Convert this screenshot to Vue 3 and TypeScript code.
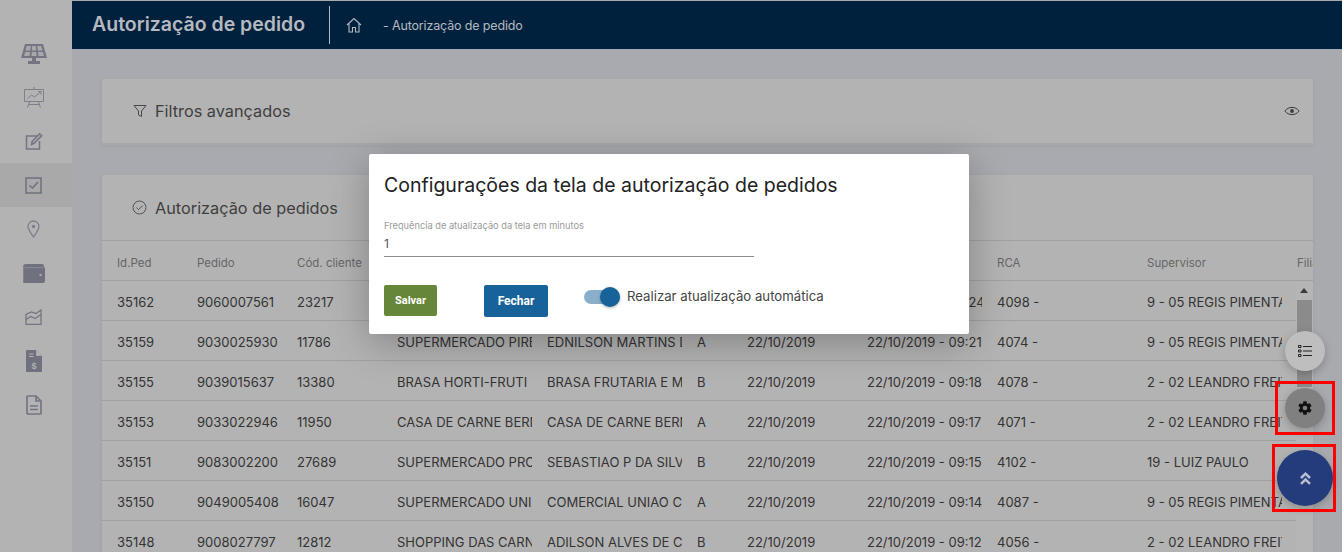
<script setup lang="ts">
interface Row { id: string; ped: string; cli: string; a: string; b: string; t: string; h: string; r: string; s: string }
const d = '22/10/2019'
const rows: Row[] = [
  { id: '35162', ped: '9060007561', cli: '23217', a: 'SUPERMERCADO SAO', b: 'MERCADO SAO JOSE', t: 'A', h: '09:24', r: '4098 -', s: '9 - 05 REGIS PIMENTA' },
  { id: '35159', ped: '9030025930', cli: '11786', a: 'SUPERMERCADO PIRES', b: 'EDNILSON MARTINS DA', t: 'A', h: '09:21', r: '4074 -', s: '9 - 05 REGIS PIMENTA' },
  { id: '35155', ped: '9039015637', cli: '13380', a: 'BRASA HORTI-FRUTI', b: 'BRASA FRUTARIA E MERCEARIA', t: 'B', h: '09:18', r: '4078 -', s: '2 - 02 LEANDRO FREITAS' },
  { id: '35153', ped: '9033022946', cli: '11950', a: 'CASA DE CARNE BERNARDO', b: 'CASA DE CARNE BERNARDO', t: 'A', h: '09:17', r: '4071 -', s: '2 - 02 LEANDRO FREITAS' },
  { id: '35151', ped: '9083002200', cli: '27689', a: 'SUPERMERCADO PROGRESSO', b: 'SEBASTIAO P DA SILVA', t: 'B', h: '09:15', r: '4102 -', s: '19 - LUIZ PAULO' },
  { id: '35150', ped: '9049005408', cli: '16047', a: 'SUPERMERCADO UNIAO', b: 'COMERCIAL UNIAO COMERCIO', t: 'A', h: '09:14', r: '4087 -', s: '9 - 05 REGIS PIMENTA' },
  { id: '35148', ped: '9008027797', cli: '12812', a: 'SHOPPING DAS CARNES', b: 'ADILSON ALVES DE CARVALHO', t: 'B', h: '09:12', r: '4056 -', s: '2 - 02 LEANDRO FREITAS' },
]
const heads = ['Id.Ped', 'Pedido', 'Cód. cliente', 'Cliente', 'Razão social', 'Tipo', 'Data', 'Data/Hora', 'RCA', 'Supervisor', 'Filial']
</script>

<template>
  <div class="page">
    <aside class="side">
      <div class="item"><svg width="28" height="21" viewBox="0 0 28 21"><path d="M5 1h18l4 14H1z" fill="#737582"/><path d="M6.800 3h4l-.6 4.500H5.500zM12.200 3h3.600l.3 4.500h-4.200zM17.200 3h4l1.300 4.500h-4.700zM5.200 9h4.800l-.5 4H4zM11.800 9h4.400l.3 4h-5zM18 9h4.800l1.200 4h-5.500z" fill="#a9a9ac"/><path d="M12 15h4v3h-4zM8 18h12v3H8z" fill="#737582"/></svg></div>
      <div class="item"><svg width="22" height="22" viewBox="0 0 22 22" fill="none" stroke="#7d7f8b" stroke-width="1"><path d="M1.500 3.500h19v12h-19zM6.500 16l-2 5.500M15.500 16l2 5.500M11 1v2.500M5.500 18.500h11"/><path d="M4.500 12.500l4-3.500 3 2 6-5M15 5.500h3V8.500"/></svg></div>
      <div class="item"><svg width="18" height="18" viewBox="0 0 18 18" fill="none" stroke="#737582" stroke-width="1.500"><path d="M12 4H1.500v13h13V9"/><path d="M6.500 12.500l.6-3.200 7.600-7.600 2 2-7.600 7.600z" fill="#a8a8a8"/></svg></div>
      <div class="item active"><svg width="17" height="17" viewBox="0 0 17 17" fill="none" stroke="#6e707d" stroke-width="1.500"><path d="M1 1h15v15H1z"/><path d="M4.500 8.500l3 2.500 5.500-6"/></svg></div>
      <div class="item"><svg width="13" height="18" viewBox="0 0 13 18" fill="none" stroke="#7d7f8b" stroke-width="1.300"><path d="M6.500 17C3.500 12.500 1 9.500 1 6.500a5.500 5.500 0 0 1 11 0C12 9.500 9.500 12.500 6.500 17z"/><circle cx="6.500" cy="6.500" r="1.100" fill="#7d7f8b"/></svg></div>
      <div class="item"><svg width="22" height="19" viewBox="0 0 22 19"><path d="M3 0h16a2 2 0 0 1 2 2v1a1.500 1.500 0 0 1 1 1.500V17a2 2 0 0 1-2 2H3a2 2 0 0 1-3-2V3a3 3 0 0 1 3-3z" fill="#6f717e"/><path d="M1 3.700h20" stroke="#8b8c95"/><path d="M0 3a3 3 0 0 1 1-2v17a2 2 0 0 1-1-1z" fill="#8f7f80"/><circle cx="17.500" cy="11" r="1.100" fill="#b8b8b8"/></svg></div>
      <div class="item"><svg width="17" height="16" viewBox="0 0 17 16" fill="none" stroke="#737582" stroke-width="1.300"><path d="M1 5.500v10h15V1L11 4.500 6.500 3z"/><path d="M1 10.500l5-3 4 2 6-4"/></svg></div>
      <div class="item"><svg width="16" height="22" viewBox="0 0 16 22"><path d="M1 0h9.500L16 5.500V21a1 1 0 0 1-1 1H1a1 1 0 0 1-1-1V1a1 1 0 0 1 1-1z" fill="#6f717e"/><path d="M10.500 0v5.500H16" fill="#b3b3b3" stroke="#b3b3b3" stroke-width=".7"/><path d="M3 4h4.500M3 6.500h4.500" stroke="#b3b3b3"/><text x="8" y="18.500" class="dollar">$</text></svg></div>
      <div class="item"><svg width="16" height="20" viewBox="0 0 16 20" fill="none" stroke="#737582" stroke-width="1.700"><path d="M2 1h8l5 5v12a1 1 0 0 1-1 1H2a1 1 0 0 1-1-1V2a1 1 0 0 1 1-1z"/><path d="M10 1v5h5M4 11h8M4 14.500h8"/></svg></div>
    </aside>

    <main class="main">
      <header class="top">
        <h1>Autorização de pedido</h1>
        <span class="vline"></span>
        <svg class="home" width="16" height="16" viewBox="0 0 16 16" fill="none" stroke="#b4b8bf" stroke-width="1.100"><path d="M1 8l7-6.500L15 8M3 6.500V15h3.500v-4.500h3V15H13V6.500"/></svg>
        <span class="crumb">- Autorização de pedido</span>
      </header>

      <div class="content">
        <section class="card filter">
          <div class="ctitle">
            <svg width="14" height="14" viewBox="0 0 14 14" fill="none" stroke="#4a4a4a" stroke-width="1"><path d="M1 1.500h12L8.500 7v5.500l-3-1.500V7z"/></svg>
            <span>Filtros avançados</span>
          </div>
          <svg width="16" height="10" viewBox="0 0 16 10"><path d="M.8 5C4.500.2 11.500.2 15.200 5 11.500 9.800 4.500 9.800.8 5z" fill="none" stroke="#3c3c3c" stroke-width="1"/><circle cx="8" cy="5" r="1.900" fill="#3c3c3c"/></svg>
        </section>

        <section class="card table">
          <div class="ctitle thead-title">
            <svg width="15" height="15" viewBox="0 0 15 15" fill="none" stroke="#555" stroke-width="1"><circle cx="7.500" cy="7.500" r="6.500"/><path d="M4.500 7.500l2.200 2.200 4-4.200"/></svg>
            <span>Autorização de pedidos</span>
          </div>
          <div class="grid head">
            <div v-for="h in heads" :key="h" class="cell">{{ h }}</div>
          </div>
          <div class="tbody">
            <div class="rows">
              <div v-for="r in rows" :key="r.id" class="grid row">
                <div class="cell">{{ r.id }}</div>
                <div class="cell">{{ r.ped }}</div>
                <div class="cell">{{ r.cli }}</div>
                <div class="cell">{{ r.a }}</div>
                <div class="cell">{{ r.b }}</div>
                <div class="cell">{{ r.t }}</div>
                <div class="cell">{{ d }}</div>
                <div class="cell">{{ d }} - {{ r.h }}</div>
                <div class="cell">{{ r.r }}</div>
                <div class="cell">{{ r.s }}</div>
              </div>
            </div>
            <div class="scroll">
              <span class="arrow"></span>
              <span class="thumb"></span>
            </div>
          </div>
        </section>
      </div>
    </main>

    <div class="modal">
      <h2>Configurações da tela de autorização de pedidos</h2>
      <label class="field">
        <span class="flabel">Frequência de atualização da tela em minutos</span>
        <span class="fvalue">1</span>
      </label>
      <div class="actions">
        <button class="btn save">Salvar</button>
        <button class="btn close">Fechar</button>
        <span class="toggle"><i></i></span>
        <span class="tlabel">Realizar atualização automática</span>
      </div>
    </div>

    <button class="fab list">
      <svg width="14" height="12" viewBox="0 0 14 12" fill="none" stroke="#222" stroke-width="1"><path d="M5 1.500h9M5 6h9M5 10.500h9"/><path d="M.5.500h2.500v2H.5zM.5 5h2.500v2H.5zM.5 9.500h2.500v2H.5z"/></svg>
    </button>
    <button class="fab gear">
      <svg width="16" height="16" viewBox="0 0 24 24"><path fill="#111" d="M19.400 13c.04-.32.06-.66.06-1s-.02-.68-.06-1l2.100-1.650a.5.500 0 0 0 .12-.64l-2-3.460a.5.500 0 0 0-.6-.22l-2.490 1a7.300 7.300 0 0 0-1.730-1l-.38-2.650A.5.500 0 0 0 13.930 2h-4a.5.500 0 0 0-.49.420l-.38 2.650c-.62.250-1.200.590-1.730 1l-2.490-1a.5.500 0 0 0-.6.220l-2 3.460a.5.500 0 0 0 .12.640L4.470 11c-.04.320-.07.660-.07 1s.03.680.07 1l-2.110 1.650a.5.500 0 0 0-.12.640l2 3.460c.12.220.38.300.6.220l2.490-1c.52.400 1.100.740 1.730 1l.38 2.650c.04.240.25.420.49.420h4c.25 0 .46-.18.49-.42l.38-2.650c.63-.26 1.200-.6 1.730-1l2.490 1c.22.080.48 0 .6-.22l2-3.460a.5.500 0 0 0-.12-.64zM12 15.500a3.500 3.500 0 1 1 0-7 3.500 3.500 0 0 1 0 7z"/></svg>
    </button>
    <button class="fab up">
      <svg width="11" height="13" viewBox="0 0 11 13" fill="none" stroke="#b9bfd0" stroke-width="2.500"><path d="M1 6l4.500-4.300L10 6M1 11.800l4.500-4.300 4.500 4.300"/></svg>
    </button>
    <span class="mark mark-gear"></span>
    <span class="mark mark-up"></span>
  </div>
</template>

<style>
html, body { margin: 0; overflow: hidden; }
</style>

<style scoped>
.page {
  position: relative; display: flex; width: 1342px; height: 552px; overflow: hidden;
  background: #a9aaaf; font-family: Inter, "Open Sans", sans-serif; color: #2f2f2f;
}
.side { width: 72px; flex: none; background: #b3b3b3; padding-top: 31px; box-sizing: border-box; }
.item { height: 44px; display: flex; align-items: center; justify-content: center; padding-right: 5px; box-sizing: border-box; }
.item.active { background: #a9a9a9; }
.dollar { font: 700 9px "Liberation Sans", sans-serif; fill: #b3b3b3; text-anchor: middle; }
.main { flex: 1; min-width: 0; }
.top {
  height: 48px; margin-top: 1px; background: #00213d; color: #b5b9bf;
  display: flex; align-items: center; padding-left: 20px;
}
h1 { margin: 0 0 2px; width: 237px; font-size: 19.500px; font-weight: 600; color: #b5b9bf; white-space: nowrap; }
.vline { width: 1px; height: 38px; background: #b5b9bf; }
.home { margin-left: 16px; }
.crumb { margin-left: 21px; font-size: 12.500px; letter-spacing: -.15px; }
.content { padding: 30px 29px 0 30px; display: flex; flex-direction: column; gap: 30px; }
.card { background: #b3b3b3; box-shadow: 0 1px 4px rgba(0,0,0,.06); }
.filter {
  height: 66px; box-sizing: border-box; border-bottom: 2px solid #a8a8ac;
  display: flex; align-items: center; justify-content: space-between; padding: 0 13px 0 31px;
}
.ctitle { display: flex; align-items: center; gap: 8px; font-size: 16.300px; font-weight: 400; color: #3f3f3f; }
.thead-title { height: 65px; padding-left: 30px; box-sizing: border-box; }
.grid { display: grid; grid-template-columns: 80px 100px 100px 150px 150px 50px 120px 130px 150px 150px 31px; }
.head { height: 41px; padding-top: 4px; border-top: 1px solid #a0a0a0; border-bottom: 1px solid #a0a0a0; box-sizing: border-box; color: #666; font-size: 11.500px; align-items: center; }
.cell { padding-left: 15px; overflow: hidden; white-space: nowrap; }
.tbody { display: flex; }
.rows { width: 1194px; }
.row { grid-template-columns: 80px 100px 100px 150px 150px 50px 120px 130px 150px 150px 14px; height: 40px; padding-top: 3px; border-bottom: 1px solid #a0a0a0; box-sizing: border-box; align-items: center; font-size: 13px; color: #333; }
.scroll { width: 17px; position: relative; background: #b5b5b5; }
.arrow { position: absolute; left: 4px; top: 7px; border: 4px solid transparent; border-top: 0; border-bottom: 5px solid #3a3a3a; }
.thumb { position: absolute; left: 1px; top: 19px; width: 15px; height: 87px; background: #8b8b8b; }
.modal {
  position: absolute; left: 369px; top: 154px; width: 600px; height: 180px; box-sizing: border-box;
  background: #fff; border-radius: 2px; padding: 19px 15px 0; box-shadow: 0 8px 40px rgba(0,0,0,.28);
}
h2 { margin: 0; font-size: 19.500px; line-height: 24px; font-weight: 400; color: #222; white-space: nowrap; }
.field { display: block; width: 370px; margin-top: 22px; height: 37px; border-bottom: 1px solid #8c8c8c; box-sizing: content-box; }
.flabel { display: block; font-size: 9.250px; line-height: 14px; color: #9a9a9a; }
.fvalue { display: block; margin-top: 3px; font-size: 12px; line-height: 16px; color: #555; }
.actions { display: flex; align-items: flex-start; margin-top: 28px; }
.btn { border: 0; border-radius: 2px; color: #fff; font: 700 11px Roboto, sans-serif; padding: 0; }
.save { width: 53px; height: 31px; background: #66873a; }
.close { width: 64px; height: 32px; margin-left: 47px; background: #176299; font-size: 12px; }
.toggle { position: relative; width: 36px; height: 14px; margin: 5px 0 0 36px; border-radius: 7px; background: #8aafcc; }
.toggle i { position: absolute; right: 0; top: -3px; width: 20px; height: 20px; border-radius: 50%; background: #176299; box-shadow: 0 1px 3px rgba(0,0,0,.3); }
.tlabel { margin: 3px 0 0 7px; font-size: 13.200px; color: #444; }
.fab { position: absolute; border: 0; padding: 0; border-radius: 50%; display: flex; align-items: center; justify-content: center; box-shadow: 0 3px 8px rgba(0,0,0,.22); }
.list { left: 1285px; top: 331px; width: 40px; height: 40px; background: #bebebe; }
.gear { left: 1285px; top: 388px; width: 40px; height: 40px; background: #808080; }
.up { left: 1277px; top: 450px; width: 56px; height: 56px; background: #243c7c; }
.mark { position: absolute; border: 3px solid #f00; box-sizing: border-box; }
.mark-gear { left: 1275px; top: 381px; width: 60px; height: 54px; }
.mark-up { left: 1272px; top: 444px; width: 64px; height: 68px; }
</style>
